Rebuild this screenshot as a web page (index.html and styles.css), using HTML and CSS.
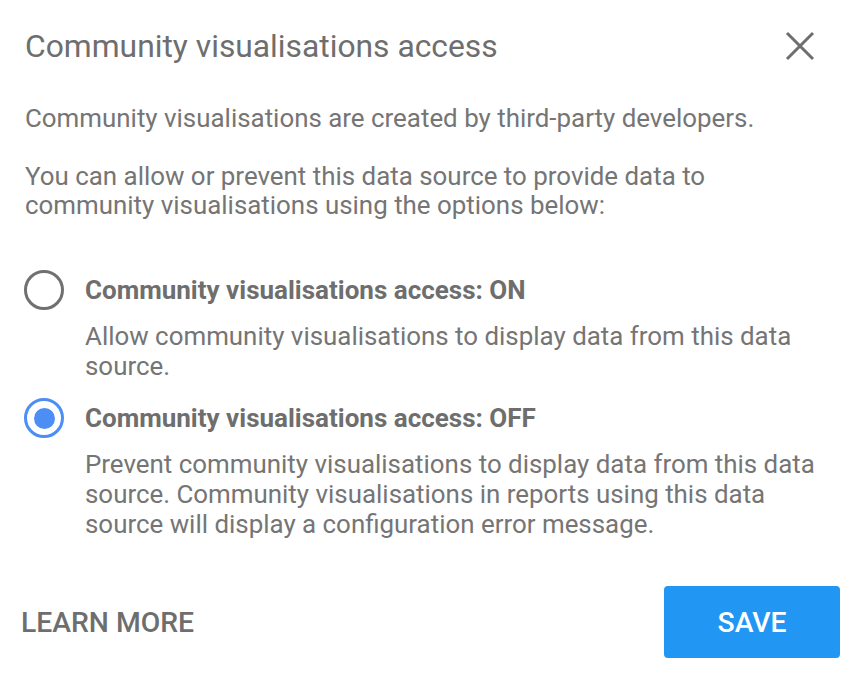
FILE: index.html
```html
<!DOCTYPE html>
<html>
<head>
<meta charset="utf-8">
<link rel="stylesheet" href="styles.css">
</head>
<body>
<div class="dialog">
  <div class="header">
    <h1 class="title">Community visualisations access</h1>
    <button class="close" aria-label="Close">
      <svg width="30" height="30" viewBox="0 0 30 30"><path d="M2 2 L28 28 M28 2 L2 28" stroke="#6e6e6e" stroke-width="3" fill="none"/></svg>
    </button>
  </div>
  <p class="intro">Community visualisations are created by third-party developers.</p>
  <p class="text">You can allow or prevent this data source to provide data to community visualisations using the options below:</p>
  <div class="options">
    <div class="option">
      <span class="radio"></span>
      <div class="opt-body">
        <div class="label">Community visualisations access: ON</div>
        <div class="desc">Allow community visualisations to display data from this data source.</div>
      </div>
    </div>
    <div class="option">
      <span class="radio checked"></span>
      <div class="opt-body">
        <div class="label">Community visualisations access: OFF</div>
        <div class="desc">Prevent community visualisations to display data from this data source. Community visualisations in reports using this data source will display a configuration error message.</div>
      </div>
    </div>
  </div>
  <div class="footer">
    <a class="learn">LEARN MORE</a>
    <button class="save">SAVE</button>
  </div>
</div>
</body>
</html>
```
FILE: styles.css
```css
* { box-sizing: border-box; }
html, body { margin: 0; padding: 0; background: #fff; }
body { font-family: Roboto, "Noto Sans", sans-serif; color: #757575; }
.dialog { width: 852px; height: 680px; padding: 26px 12px 0 25px; display: flex; flex-direction: column; }
.header { display: flex; align-items: center; justify-content: space-between; height: 40px; }
.title { margin: 0; font-weight: 400; font-size: 31.8px; line-height: 40px; color: #6e6e6e; }
.close { background: none; border: 0; padding: 0; width: 30px; height: 30px; margin-right: 25px; }
.close svg { display: block; }
.intro { margin: 37px 0 0; font-size: 25.9px; line-height: 30px; }
.text { margin: 29px 0 0; font-size: 25.9px; line-height: 29px; width: 760px; }
.options { margin-top: 55px; display: flex; flex-direction: column; gap: 22px; }
.option { display: flex; align-items: flex-start; gap: 21px; }
.radio { flex: none; width: 40px; height: 40px; border-radius: 50%; border: 3.5px solid #707070; margin-left: -1px; margin-top: -5px; display: flex; align-items: center; justify-content: center; }
.radio.checked { border-color: #4d8ef5; }
.radio.checked::after { content: ""; width: 21px; height: 21px; border-radius: 50%; background: #4d8ef5; }
.opt-body { width: 750px; }
.label { font-weight: 700; font-size: 26px; line-height: 30px; color: #6e6e6e; }
.desc { margin-top: 16px; font-size: 25.9px; line-height: 30px; }
.footer { margin-top: auto; margin-bottom: 22px; display: flex; align-items: center; justify-content: space-between; }
.learn { font-size: 28.3px; font-weight: 500; color: #6e6e6e; margin-left: -4px; }
.save { width: 176px; height: 72px; background: #2196f3; border: 0; border-radius: 4px; color: #fff; font-family: Roboto, sans-serif; font-size: 28.3px; font-weight: 500; }
```
